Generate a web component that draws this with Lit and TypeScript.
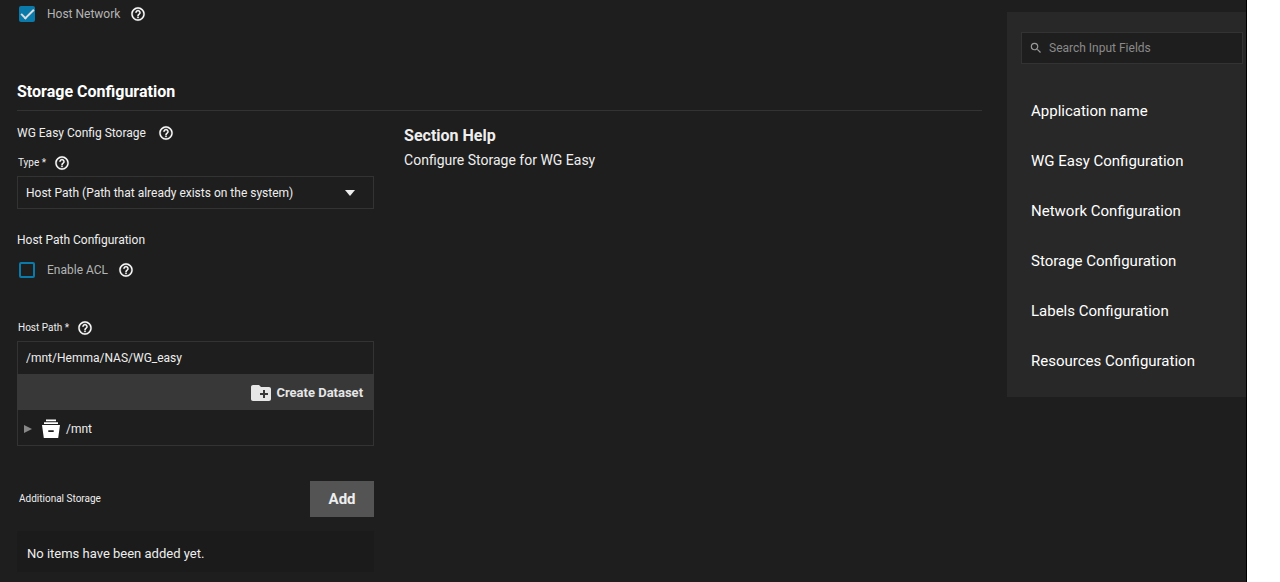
import { LitElement, html, css } from "lit";
import { customElement, property, state } from "lit/decorators.js";

@customElement("help-button")
class HelpButton extends LitElement {
  @property() label = "Help";

  static styles = css`
    :host {
      display: flex;
    }
    .help {
      display: flex;
      padding: 0;
      border: 0;
      background: none;
      color: #fff;
      cursor: pointer;
    }
    .icon {
      width: 16px;
      height: 16px;
      fill: currentColor;
    }
  `;

  render() {
    return html`
      <button class="help" type="button" aria-label=${this.label}>
        <svg class="icon" viewBox="0 0 24 24" aria-hidden="true">
          <path
            stroke="currentColor"
            stroke-width="0.4"
            d="M11 18h2v-2h-2v2zm1-16C6.48 2 2 6.48 2 12s4.48 10 10 10 10-4.48 10-10S17.52 2 12 2zm0 18c-4.41 0-8-3.59-8-8s3.59-8 8-8 8 3.59 8 8-3.59 8-8 8zm0-14c-2.21 0-4 1.79-4 4h2c0-1.1.9-2 2-2s2 .9 2 2c0 2-3 1.75-3 5h2c0-2.25 3-2.5 3-5 0-2.21-1.79-4-4-4z"
          />
        </svg>
      </button>
    `;
  }
}

@customElement("app-root")
class AppRoot extends LitElement {
  @state() private hostNetwork = true;
  @state() private enableAcl = false;

  private sections = [
    "Application name",
    "WG Easy Configuration",
    "Network Configuration",
    "Storage Configuration",
    "Labels Configuration",
    "Resources Configuration",
  ];

  static styles = css`
    :host {
      display: block;
      background: #fff;
      font-family: Roboto, "Liberation Sans", sans-serif;
      font-size: 12px;
      line-height: 22px;
      color: #eee;
    }
    * {
      box-sizing: border-box;
    }
    input,
    select,
    button {
      font: inherit;
      color: inherit;
      margin: 0;
      border-radius: 0;
    }
    .page {
      display: flex;
      align-items: flex-start;
      gap: 25px;
      min-height: 100vh;
      margin-right: 33px;
      padding-left: 17px;
      background: #1e1e1e;
      border-right: 1px solid #000;
    }
    .main {
      flex: 1;
      min-width: 0;
      padding-bottom: 10px;
    }
    .row {
      display: flex;
      align-items: center;
      height: 22px;
      gap: 8px;
    }
    .check-row {
      gap: 10px;
    }
    .host-network {
      height: 28px;
    }
    .check {
      display: flex;
      align-items: center;
      gap: 12px;
      padding-left: 2px;
      color: #b4b4b4;
    }
    .tick {
      appearance: none;
      width: 16px;
      height: 16px;
      border: 2px solid #0a7aaa;
      border-radius: 2px;
      display: grid;
      place-items: center;
    }
    .tick:checked {
      background: #0a7aaa;
    }
    .tick:checked::before {
      content: "";
      width: 11px;
      height: 5px;
      margin-bottom: 4px;
      border: solid #ddd;
      border-width: 0 0 2px 2px;
      rotate: -45deg;
    }
    .title {
      margin: 51px 0 0;
      padding-bottom: 5px;
      border-bottom: 1px solid #333;
      font-size: 16px;
      line-height: 26px;
      font-weight: 700;
      color: #fff;
    }
    .columns {
      display: grid;
      grid-template-columns: 37% 1fr;
      gap: 30px;
      padding-top: 10px;
    }
    .subtitle {
      margin: 0;
      font-size: 12px;
      font-weight: 400;
    }
    .wide {
      gap: 12px;
      height: 24px;
    }
    .type {
      margin-top: 7px;
    }
    .field-label {
      font-size: 10px;
      padding-left: 1px;
    }
    .select-box {
      display: grid;
      align-items: center;
      margin-top: 2px;
    }
    .select,
    .arrow {
      grid-area: 1 / 1;
    }
    .select {
      appearance: none;
      width: 100%;
      height: 33px;
      padding: 0 40px 0 8px;
      background: #1e1e1e;
      border: 1px solid #333;
    }
    .arrow {
      justify-self: end;
      margin-right: 18px;
      width: 12px;
      height: 6px;
      fill: #eee;
      pointer-events: none;
    }
    .path-config {
      margin-top: 20px;
      line-height: 22px;
    }
    .acl {
      margin-top: 8px;
    }
    .path-label {
      margin-top: 36px;
    }
    .path {
      display: block;
      width: 100%;
      height: 33px;
      margin-top: 2px;
      padding: 0 8px;
      background: #1e1e1e;
      border: 1px solid #333;
      border-bottom: 0;
    }
    .toolbar {
      display: flex;
      justify-content: flex-end;
      height: 36px;
      padding: 2px 11px 0 0;
      background: #383838;
    }
    .create {
      display: flex;
      align-items: center;
      gap: 3px;
      padding: 0;
      border: 0;
      background: none;
      font-size: 13px;
      font-weight: 700;
      color: #e6e6e6;
    }
    .folder {
      width: 24px;
      height: 24px;
      fill: currentColor;
    }
    .tree {
      display: flex;
      align-items: center;
      height: 36px;
      padding: 2px 0 0 6px;
      border: 1px solid #333;
      border-top: 0;
    }
    .expand {
      display: flex;
      padding: 0;
      border: 0;
      background: none;
      color: #888;
    }
    .expand-icon {
      width: 8px;
      height: 8px;
      fill: currentColor;
    }
    .drive {
      width: 18px;
      height: 19px;
      margin: 0 6px 0 10px;
      fill: #fff;
    }
    .additional {
      display: flex;
      align-items: center;
      justify-content: space-between;
      margin-top: 35px;
      padding-left: 2px;
      font-size: 10px;
    }
    .add {
      width: 64px;
      height: 36px;
      padding: 0;
      border: 0;
      background: #545454;
      font-size: 15px;
      font-weight: 700;
      color: #eee;
    }
    .empty {
      margin: 14px 0 0;
      padding: 12px 10px 7px;
      background: #1b1b1b;
      font-size: 13px;
    }
    .help-title {
      margin: 3px 0 0;
      font-size: 16px;
      line-height: 24px;
      font-weight: 700;
    }
    .help-text {
      margin: 0;
      font-size: 14px;
      line-height: 24px;
    }
    .side {
      flex: 0 0 239px;
      margin-top: 12px;
      padding: 20px 3px 11px 14px;
      background: #282828;
    }
    .search {
      display: flex;
      align-items: center;
      gap: 6px;
      height: 32px;
      padding-left: 7px;
      background: #1e1e1e;
      border: 1px solid #333;
    }
    .search-icon {
      flex: none;
      width: 14px;
      height: 14px;
      fill: #999;
    }
    .search-input {
      flex: 1;
      min-width: 0;
      padding: 0;
      border: 0;
      background: none;
    }
    .search-input::placeholder {
      color: #8a8a8a;
      opacity: 1;
    }
    .nav {
      margin: 22px 0 0;
      padding: 0 0 0 10px;
      list-style: none;
      font-size: 15px;
      line-height: 50px;
    }
    .link {
      color: #fff;
      text-decoration: none;
    }
  `;

  render() {
    return html`
      <div class="page">
        <main class="main">
          <div class="row check-row host-network">
            <label class="check">
              <input
                class="tick"
                type="checkbox"
                .checked=${this.hostNetwork}
                @change=${() => (this.hostNetwork = !this.hostNetwork)}
              />
              Host Network
            </label>
            <help-button label="Help for Host Network"></help-button>
          </div>

          <h2 class="title">Storage Configuration</h2>
          <div class="columns">
            <section>
              <div class="row wide">
                <h3 class="subtitle">WG Easy Config Storage</h3>
                <help-button label="Help for WG Easy Config Storage"></help-button>
              </div>
              <div class="row type">
                <label class="field-label" for="type">Type *</label>
                <help-button label="Help for Type"></help-button>
              </div>
              <div class="select-box">
                <select class="select" id="type">
                  <option>Host Path (Path that already exists on the system)</option>
                </select>
                <svg class="arrow" viewBox="0 0 12 6" aria-hidden="true">
                  <path d="M1 0h10L6 6z" />
                </svg>
              </div>

              <h3 class="subtitle path-config">Host Path Configuration</h3>
              <div class="row check-row acl">
                <label class="check">
                  <input
                    class="tick"
                    type="checkbox"
                    .checked=${this.enableAcl}
                    @change=${() => (this.enableAcl = !this.enableAcl)}
                  />
                  Enable ACL
                </label>
                <help-button label="Help for Enable ACL"></help-button>
              </div>

              <div class="row path-label">
                <label class="field-label" for="path">Host Path *</label>
                <help-button label="Help for Host Path"></help-button>
              </div>
              <input class="path" id="path" type="text" value="/mnt/Hemma/NAS/WG_easy" />
              <div class="toolbar">
                <button class="create" type="button">
                  <svg class="folder" viewBox="0 0 24 24" aria-hidden="true">
                    <path
                      d="M20 6h-8l-2-2H4c-1.11 0-1.99.89-1.99 2L2 18c0 1.11.89 2 2 2h16c1.11 0 2-.89 2-2V8c0-1.11-.89-2-2-2zm-1 8h-3v3h-2v-3h-3v-2h3V9h2v3h3v2z"
                    />
                  </svg>
                  Create Dataset
                </button>
              </div>
              <div class="tree">
                <button class="expand" type="button" aria-label="Expand /mnt">
                  <svg class="expand-icon" viewBox="0 0 8 8" aria-hidden="true">
                    <path d="M0 0l8 4-8 4z" />
                  </svg>
                </button>
                <svg class="drive" viewBox="0 0 18 19" aria-hidden="true">
                  <path d="M4 0.5h10v1.7H4zM2 3.2h14v1.8H2z" />
                  <path fill-rule="evenodd" d="M0 6h18l-1.8 13H1.8zM6.300 11.200v1.800h5.400v-1.800z" />
                </svg>
                <span>/mnt</span>
              </div>

              <div class="additional">
                <span>Additional Storage</span>
                <button class="add" type="button">Add</button>
              </div>
              <p class="empty">No items have been added yet.</p>
            </section>

            <aside>
              <h3 class="help-title">Section Help</h3>
              <p class="help-text">Configure Storage for WG Easy</p>
            </aside>
          </div>
        </main>

        <aside class="side">
          <label class="search">
            <svg class="search-icon" viewBox="0 0 24 24" aria-hidden="true">
              <path
                d="M15.5 14h-.79l-.28-.27A6.47 6.47 0 0 0 16 9.5 6.5 6.5 0 1 0 9.5 16c1.61 0 3.09-.59 4.23-1.57l.27.28v.79l5 4.99L20.49 19l-4.99-5zm-6 0C7.01 14 5 11.99 5 9.5S7.01 5 9.5 5 14 7.01 14 9.5 11.99 14 9.5 14z"
              />
            </svg>
            <input
              class="search-input"
              type="text"
              placeholder="Search Input Fields"
              aria-label="Search Input Fields"
            />
          </label>
          <ul class="nav">
            ${this.sections.map(
              (name) => html`<li><a class="link" href="#">${name}</a></li>`
            )}
          </ul>
        </aside>
      </div>
    `;
  }
}
